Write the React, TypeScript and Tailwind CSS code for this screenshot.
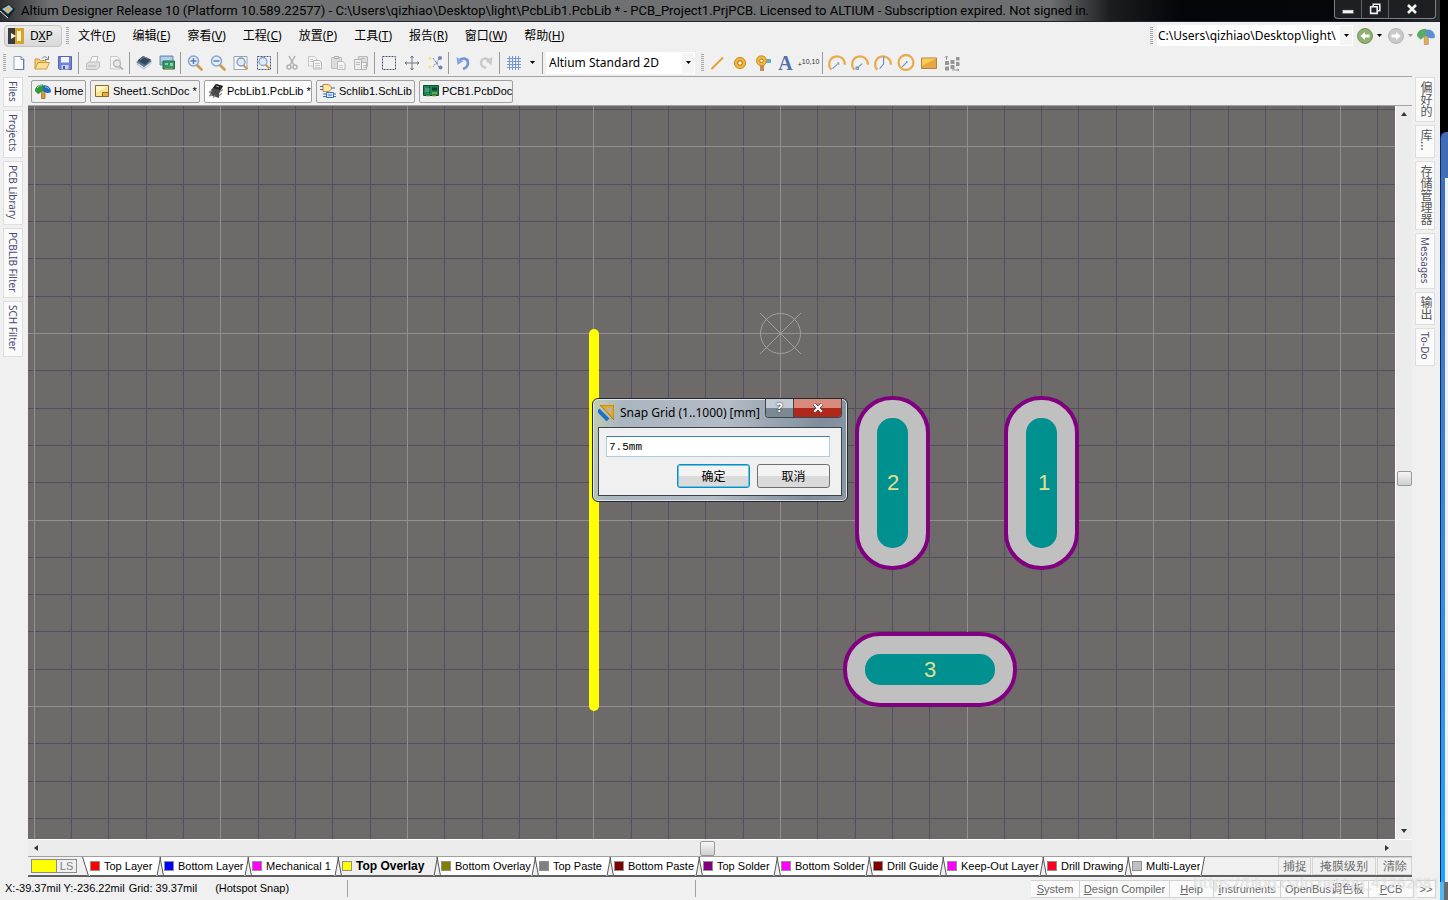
import type { ReactNode } from "react";
import clsx from "clsx";

const menus = [
  ["文件", "F"],
  ["编辑", "E"],
  ["察看", "V"],
  ["工程", "C"],
  ["放置", "P"],
  ["工具", "T"],
  ["报告", "R"],
  ["窗口", "W"],
  ["帮助", "H"],
];

const layers = [
  { name: "Top Layer", color: "bg-[#ff0000]", width: "w-[66px]" },
  { name: "Bottom Layer", color: "bg-[#0000ff]", width: "w-[80px]" },
  { name: "Mechanical 1", color: "bg-[#ff00ff]", width: "w-[82px]" },
  { name: "Top Overlay", color: "bg-[#ffff00]", width: "w-[91px]", active: true },
  { name: "Bottom Overlay", color: "bg-[#808000]", width: "w-[90px]" },
  { name: "Top Paste", color: "bg-[#808080]", width: "w-[67px]" },
  { name: "Bottom Paste", color: "bg-[#800000]", width: "w-[81px]" },
  { name: "Top Solder", color: "bg-[#800080]", width: "w-[70px]" },
  { name: "Bottom Solder", color: "bg-[#ff00ff]", width: "w-[84px]" },
  { name: "Drill Guide", color: "bg-[#800000]", width: "w-[66px]" },
  { name: "Keep-Out Layer", color: "bg-[#ff00ff]", width: "w-[92px]" },
  { name: "Drill Drawing", color: "bg-[#ff0022]", width: "w-[77px]" },
  { name: "Multi-Layer", color: "bg-[#c0c0c0]", width: "w-[68px]" },
];

const leftPanels = [
  { name: "Files", height: "h-[30px]" },
  { name: "Projects", height: "h-[48px]" },
  { name: "PCB Library", height: "h-[64px]" },
  { name: "PCBLIB Filter", height: "h-[70px]" },
  { name: "SCH Filter", height: "h-[56px]" },
];

const rightPanels = [
  { name: "偏好的", height: "h-[45px]", wide: true },
  { name: "库...", height: "h-[33px]", wide: true },
  { name: "存储管理器", height: "h-[69px]", wide: true },
  { name: "Messages", height: "h-[56px]" },
  { name: "输出", height: "h-[33px]", wide: true },
  { name: "To-Do", height: "h-[38px]" },
];

const orange = "#e0a030";

function Svg({ children, size = "size-4" }: { children: ReactNode; size?: string }) {
  return (
    <svg viewBox="0 0 16 16" className={clsx(size, "shrink-0")} fill="none" aria-hidden="true">
      {children}
    </svg>
  );
}

function Lens({ inner }: { inner?: ReactNode }) {
  return (
    <>
      <path d="M10 10l4.5 4.5" stroke="#d09a4a" strokeWidth="2.6" strokeLinecap="round" />
      <circle cx="6.5" cy="6" r="5" fill="#e2edfb" stroke="#8aa4cc" strokeWidth="1.5" />
      {inner}
    </>
  );
}

function Gauge({ hand, full }: { hand: string; full?: boolean }) {
  return (
    <Svg size="size-[18px]">
      {full ? (
        <circle cx="8" cy="7.5" r="6.6" stroke="#e8ab50" strokeWidth="2" />
      ) : (
        <path d="M3 14A7 7 0 1 1 15 9.500" stroke="#e8ab50" strokeWidth="2" />
      )}
      <path d={hand} stroke="#6b90c8" strokeWidth="1" />
    </Svg>
  );
}

const icons: Record<string, ReactNode> = {
  new: (
    <Svg>
      <path d="M3 1.5h7l3 3v10H3z" fill="#fbfdff" stroke="#8ea3bd" />
      <path d="M10 1.5v3h3" stroke="#7389a8" />
      <path d="M12.5 5v9.5H5" stroke="#63799a" />
    </Svg>
  ),
  open: (
    <Svg>
      <path d="M1 14V4h4l1.500 1.500H12V8" fill="#f2cd78" stroke="#c99a3c" />
      <path d="M1 14l3-6.500h11.500L12.500 14z" fill="#ffdf96" stroke="#c99a3c" />
      <path d="M8 3.500c2-2.500 4-2 5.500 0M14.500 1v3.500H11" stroke="#6c84a8" />
    </Svg>
  ),
  save: (
    <Svg>
      <path d="M1.500 1.500h13v13h-12l-1-1z" fill="#7183d6" stroke="#5865b0" />
      <path d="M4 2h8v5.500H4z" fill="#f4f6ff" />
      <path d="M4.500 10h7v4.500h-7z" fill="#c8d0ea" />
      <path d="M6 11h2v3H6z" fill="#4a58a0" />
    </Svg>
  ),
  print: (
    <Svg>
      <path d="M5 7l2-5.500h6L11.500 7" fill="#f6f6f6" stroke="#c0c0c0" />
      <path d="M1.500 8.500L4 7h10.500v5L12 14.500H1.500z" fill="#dedede" stroke="#bcbcbc" />
      <path d="M3 11h8" stroke="#b4b4b4" />
    </Svg>
  ),
  preview: (
    <Svg>
      <path d="M2.500 1.500h7l2.500 3v9.500H2.500z" fill="#f4f4f4" stroke="#c9c9c9" />
      <circle cx="9" cy="8.500" r="3.500" fill="#e7e7e7" stroke="#b8b8b8" strokeWidth="1.400" />
      <path d="M11.500 11.500l3.500 3" stroke="#b5b5b5" strokeWidth="2" />
    </Svg>
  ),
  layers: (
    <Svg>
      <path d="M0 9l8 5.500L16 8l-8-3z" fill="#a9bdd3" />
      <path d="M0 7l8 5 8-6-7-3.500z" fill="#607890" />
      <path d="M1.500 5.500L7 1l8 3.500-6 5.500z" fill="#33475d" />
      <path d="M4 5l4-3 4 1.500" stroke="#6d88a5" />
      <path d="M2 9l6 4 7-5" stroke="#dce7f2" />
    </Svg>
  ),
  board: (
    <Svg>
      <path d="M1 1h13v9H1z" fill="#94b4d8" stroke="#6c8fb8" />
      <path d="M2 3h11M2 5h11" stroke="#dceaf8" />
      <path d="M4 6h11.500v8H4z" fill="#31976a" stroke="#1d704b" />
      <path d="M6 8h3v2H6zM11 8h3v3h-3z" fill="#8fd0a0" />
      <path d="M7 13v2M9 13v2M11 13v2M13 13v2" stroke="#c9a33f" />
    </Svg>
  ),
  zoomIn: <Svg><Lens inner={<path d="M3.500 6h6M6.500 3v6" stroke="#5877ad" strokeWidth="1.400" />} /></Svg>,
  zoomOut: <Svg><Lens inner={<path d="M3.500 6h6" stroke="#5877ad" strokeWidth="1.400" />} /></Svg>,
  zoomDoc: (
    <Svg>
      <path d="M1 1.500h13v13H1z" fill="#f8fafc" stroke="#98a4b4" />
      <path d="M10 10l4.500 4" stroke="#d09a4a" strokeWidth="2.200" />
      <circle cx="8" cy="7" r="4" fill="#dceafa" stroke="#7e98c0" strokeWidth="1.300" />
    </Svg>
  ),
  zoomArea: (
    <Svg>
      <path d="M1.500 1.500h13v13h-13z" stroke="#46557c" strokeDasharray="2 1" />
      <path d="M9.500 9.500l4 4" stroke="#d09a4a" strokeWidth="2.200" />
      <circle cx="7" cy="6.500" r="4" fill="#dceafa" stroke="#8aa4cc" strokeWidth="1.300" />
    </Svg>
  ),
  cut: (
    <Svg>
      <path d="M5 1l5 9M11 1L6 10" stroke="#b0b0b0" strokeWidth="1.500" />
      <circle cx="5" cy="12" r="2" stroke="#b0b0b0" strokeWidth="1.500" />
      <circle cx="11" cy="12" r="2" stroke="#b0b0b0" strokeWidth="1.500" />
    </Svg>
  ),
  copy: (
    <Svg>
      <path d="M1.500 1.500h6l2 2V11h-8z" fill="#f3f3f3" stroke="#c8c8c8" />
      <path d="M6.500 5.500h6l2 2V14h-8z" fill="#f3f3f3" stroke="#b8b8b8" />
      <path d="M8 8.500h5M8 10.500h5M8 12.500h5M3 4.500h3M3 6.500h3" stroke="#c8c8c8" />
    </Svg>
  ),
  paste: (
    <Svg>
      <path d="M1.500 2.500h10v11h-10z" fill="#dcdcdc" stroke="#c0c0c0" />
      <path d="M4.500 1.500h4v2h-4z" fill="#eee" stroke="#aaa" />
      <path d="M7.500 6.500H13l2 2v6H7.500z" fill="#f6f6f6" stroke="#b8b8b8" />
      <path d="M9 10.500h4M9 12.500h4" stroke="#c5c5c5" />
    </Svg>
  ),
  stamp: (
    <Svg>
      <path d="M5.500 1.500h9v10h-9z" fill="#dcdcdc" stroke="#bcbcbc" />
      <path d="M1.500 4.500h7v10h-7z" fill="#eee" stroke="#b5b5b5" />
      <path d="M8.500 7.500h5v7h-5z" fill="#f6f6f6" stroke="#b0b0b0" />
      <path d="M3 7.500h4M3 9.500h4M10 10.500h3M10 12.500h3M8 3.500h4" stroke="#bbb" />
    </Svg>
  ),
  select: <Svg><path d="M1.500 1.500h13v13h-13z" stroke="#46557c" strokeDasharray="2 1" /></Svg>,
  move: (
    <Svg>
      <path d="M8 1v14M1 8h14" stroke="#6e7684" />
      <path d="M6.500 3L8 1l1.500 2M6.500 13L8 15l1.500-2M3 6.500L1 8l2 1.500M13 6.500L15 8l-2 1.500" stroke="#6e7684" />
    </Svg>
  ),
  deselect: (
    <Svg>
      <path d="M6 3l6 9M12 4l-6 8" stroke="#6d7fa0" strokeDasharray="2 1" />
      <circle cx="3" cy="3.500" r="1.800" fill="#f3e2a0" />
      <circle cx="3" cy="12" r="1.800" fill="#f3e2a0" />
      <circle cx="13" cy="3" r="2" fill="#6f86b4" />
      <circle cx="13.500" cy="12.500" r="2" fill="#6f86b4" />
      <circle cx="10" cy="8" r="1.200" fill="#8ba0c8" />
    </Svg>
  ),
  undo: (
    <Svg>
      <path d="M4 6c3-4 9-3 9 2 0 3-2 5-5 6" stroke="#7495dc" strokeWidth="2.600" />
      <path d="M1.500 2l1 8 6-4z" fill="#86a5e4" />
    </Svg>
  ),
  redo: (
    <Svg>
      <path d="M12 6C9 2 3 3 3 8c0 3 2 4 5 5" stroke="#c9c9c9" strokeWidth="2.400" />
      <path d="M14.500 2l-1 8-6-4z" fill="#c9c9c9" />
    </Svg>
  ),
  grid: <Svg><path d="M3.500 1v14M6.500 1v14M9.500 1v14M12.500 1v14M1 3.500h14M1 6.500h14M1 9.500h14M1 12.500h14" stroke="#7896d0" /></Svg>,
  line: <Svg><path d="M2.500 14L14 2.500" stroke={orange} strokeWidth="1.800" /></Svg>,
  pad: (
    <Svg>
      <circle cx="8" cy="8" r="5.600" fill="#f2b93c" stroke="#c58a28" />
      <circle cx="8" cy="8" r="2.400" stroke="#a9751e" />
      <circle cx="8" cy="8" r="1.500" fill="#fff" />
    </Svg>
  ),
  via: (
    <Svg>
      <path d="M8 4h8v4H8z" fill="#5cb0d8" />
      <path d="M5 8h4v8H5z" fill="#c98a62" />
      <circle cx="6.500" cy="5.800" r="5" fill="#f2b93c" stroke="#c58a28" />
      <circle cx="6.500" cy="5.800" r="1.800" fill="#fff4d0" stroke="#b07c20" />
    </Svg>
  ),
  text: <span className="font-['Liberation_Serif',serif] text-xl leading-none font-bold text-[#4f70ae]">A</span>,
  coord: (
    <span className="flex items-end font-['Liberation_Sans',sans-serif] text-[7px] leading-none text-[#333]">
      <span>+</span>
      <span className="pb-[3px]">10,10</span>
    </span>
  ),
  arc1: <Gauge hand="M4 13l4.500-4M8 8h1.500v1.500" />,
  arc2: <Gauge hand="M5.500 12.500L10 8.500M4.500 11.500h2v2h-2z" />,
  arc3: <Gauge hand="M8.500 2v7L5 13" />,
  circle: <Gauge full hand="M4.500 11.500L9 7M8 7h1.500" />,
  fill: (
    <Svg>
      <path d="M.500 3h15v10.500H.500z" fill="#e3a743" stroke="#b67e45" />
      <path d="M1 3.500h14L1 11z" fill="#f7cb54" />
    </Svg>
  ),
  array: (
    <Svg>
      <path
        d="M1 6h4v4H1zM1 11.500h4v4H1zM6.500 5h4v4h-4zM6.500 10h4v4h-4zM12 2h3.500v3.500H12zM12 7h3.500v4H12z"
        fill="#969696"
      />
      <path d="M2.500 5V1M1 2.500L2.500 1 4 2.500M8 15h7M13.500 13.500L15 15l-1.500 1" stroke="#969696" />
    </Svg>
  ),
  tree: (
    <Svg>
      <path d="M6.500 5h3.500v10.500H6.500z" fill="#d79c2e" stroke="#7a5418" strokeWidth=".600" />
      <path d="M0 8c0-4 3-6.500 8-6.500V8c-2 0-3 3-5 3z" fill="#2f9a3a" />
      <path d="M8 2.500c4-1 8 2 8 6.500-2 2-5 1-8-1z" fill="#2268c4" />
      <path d="M2 5c2-2 3-2.500 5-2.500M10 4c2 0 3 1 4 2" stroke="#9fd6a0" />
    </Svg>
  ),
  sheet: (
    <Svg>
      <path d="M1.500 2.500h13v11h-13z" fill="#fbe38c" stroke="#8a6d24" />
      <path d="M2 3h12L2 10z" fill="#fff6c8" />
      <path d="M8.500 9.500h6v4h-6z" fill="#e2b23f" stroke="#8a6d24" />
    </Svg>
  ),
  chip: (
    <Svg>
      <path d="M3 7l5-6 7 2-4 8v4l-9-3z" fill="#4a4a4a" />
      <path d="M8 1l7 2-3 4-7-2z" fill="#222" />
      <path d="M1 9.500l3-1.500M1 13l3-1.500M5 14.500l2-2M11 12.500l3-2M12 8.500l3-2" stroke="#8a8a8a" strokeWidth="1.500" />
      <path d="M8 3l3 1" stroke="#aaa" />
    </Svg>
  ),
  schlib: (
    <Svg>
      <path d="M3 1.500h4c6 0 6 7 0 7H3z" fill="#ffe9a8" stroke="#c58a28" />
      <path d="M0 3.500h3M0 6.500h3M11.500 5H15" stroke="#2f66b4" />
      <path d="M6.500 9.500h7v5h-7z" fill="#d8e8fb" stroke="#3a6fb8" />
      <path d="M3 11h3M3 13.500h3M14 11h2M14 13.500h2M8 12h4" stroke="#3a6fb8" />
    </Svg>
  ),
  pcb: (
    <Svg>
      <path d="M.500 2.500h15v10H.500z" fill="#128a50" stroke="#0b4f30" />
      <path d="M2 4h5v6H2z" fill="#0a3c30" />
      <path d="M3 4v6M5 4v6M2 6h5M2 8h5" stroke="#7cc7a4" strokeWidth=".800" />
      <path d="M9 4.500h5v3H9z" fill="#173b2c" />
      <path d="M9 10h5M4 12v2M6 12v2M10 12v2M12 12v2" stroke="#d7b747" />
    </Svg>
  ),
};

const toolGroups = [
  ["new", "open", "save"],
  ["print", "preview"],
  ["layers", "board"],
  ["zoomIn", "zoomOut", "zoomDoc", "zoomArea"],
  ["cut", "copy", "paste", "stamp"],
  ["select", "move", "deselect"],
  ["undo", "redo"],
];

const docs = [
  { icon: "tree", name: "Home", width: "w-[55px]" },
  { icon: "sheet", name: "Sheet1.SchDoc *", width: "w-[110px]" },
  { icon: "chip", name: "PcbLib1.PcbLib *", width: "w-[108px]", active: true },
  { icon: "schlib", name: "Schlib1.SchLib", width: "w-[99px]" },
  { icon: "pcb", name: "PCB1.PcbDoc", width: "w-[94px]" },
];

function Grip() {
  return <div className="h-[18px] w-[3px] shrink-0 bg-[repeating-linear-gradient(#a8a8a8_0_1px,transparent_1px_2px)]" />;
}

function Sep() {
  return (
    <div className="flex w-[5px] shrink-0 justify-center">
      <div className="h-[22px] w-px bg-[#9a9a9a]" />
    </div>
  );
}

function Caret({ className }: { className?: string }) {
  return (
    <svg viewBox="0 0 5 3" className={clsx("h-[3px] w-[5px] shrink-0", className)} fill="currentColor" aria-hidden="true">
      <path d="M0 0h5L2.500 3z" />
    </svg>
  );
}

function Tool({ name }: { name: string }) {
  return (
    <button type="button" aria-label={name} className="flex h-6 w-[23px] shrink-0 items-center justify-center">
      {icons[name]}
    </button>
  );
}

function TitleBar() {
  return (
    <header className="flex h-[22px] shrink-0 items-center justify-between border-b border-[#1b2434] bg-[linear-gradient(90deg,#2c2e2f_0,#6f7172_50px,#6d6f70_1050px,#1b1d1f_1110px,#030608_1180px,#05080a_95%,#2a2e30)]">
      <div className="flex items-center gap-[5px] whitespace-nowrap">
        <Svg>
          <path d="M0 6l9-5 6 5-6 9z" fill="#13252d" />
          <path d="M2 6l7-4 4 4-5 5z" fill="#9ec0c4" />
          <path d="M5 7l4-3 2 2-3 3z" fill="#d8b25a" />
          <path d="M0 8l8 7" stroke="#dfe8e8" />
        </Svg>
        <h1 className="font-['Roboto',sans-serif] text-[13px] leading-5 text-black">
          Altium Designer Release 10 (Platform 10.589.22577) - C:\Users\qizhiao\Desktop\light\PcbLib1.PcbLib * -
          PCB_Project1.PrjPCB. Licensed to ALTIUM - Subscription expired. Not signed in.
        </h1>
      </div>
      <div className="mr-1 flex h-[19px] self-start rounded-b border border-t-0 border-[#7c8082] bg-[#1d2022] text-white">
        <button type="button" aria-label="Minimize" className="flex w-[27px] items-center justify-center border-r border-[#5f6365]">
          <Svg><path d="M2.500 9h11v3.500h-11z" fill="#f4f4f4" stroke="#555" strokeWidth=".500" /></Svg>
        </button>
        <button type="button" aria-label="Restore" className="flex w-[27px] items-center justify-center border-r border-[#5f6365]">
          <Svg size="size-[14px]"><path d="M6 5V2.500h7.500V10H11M3 5.500h7.500V13H3z" stroke="#f4f4f4" strokeWidth="1.800" /></Svg>
        </button>
        <button type="button" aria-label="Close" className="flex w-[46px] items-center justify-center">
          <Svg><path d="M4 4l8 8M12 4l-8 8" stroke="#f4f4f4" strokeWidth="2.600" /></Svg>
        </button>
      </div>
    </header>
  );
}

function MenuBar() {
  return (
    <nav className="flex h-[27px] shrink-0 items-center text-xs text-black">
      <button type="button" className="ml-1 flex h-[22px] w-[58px] shrink-0 items-center gap-[6px] rounded-sm border border-[#c4c4c4] bg-linear-to-b from-[#ececec] to-[#d9d9d9] pl-[3px]">
        <Svg>
          <path d="M0 0h7v16H0z" fill="#3b3b3b" />
          <path d="M7 0h9v16H7z" fill="#d6a42c" />
          <path d="M9 3h4v10H9z" fill="#fff2c0" />
          <path d="M3 5l5 3-5 3z" fill="#f0f0f0" />
        </Svg>
        <span>D<u>X</u>P</span>
      </button>
      <div className="ml-1"><Grip /></div>
      <ul className="ml-[9px] flex gap-[17px]">
        {menus.map(([label, key]) => (
          <li key={key}>
            <button type="button" className="whitespace-nowrap">{label}(<u>{key}</u>)</button>
          </li>
        ))}
      </ul>
      <div className="ml-auto flex items-center">
        <Grip />
        <div className="relative ml-1 h-[21px] w-[196px] border border-white bg-white">
          <select aria-label="Address" className="block h-full w-[182px] appearance-none overflow-hidden text-clip">
            <option>C:\Users\qizhiao\Desktop\light\</option>
          </select>
          <span className="pointer-events-none absolute inset-y-0 right-0 flex w-3 items-center justify-center bg-[#f4f4f4]">
            <Caret />
          </span>
        </div>
        <button type="button" aria-label="Back" className="ml-1 flex items-center gap-1">
          <Svg>
            <circle cx="8" cy="8" r="7.500" fill="#8fb070" stroke="#75935a" />
            <path d="M3.500 8L8 4v2.500h4.500v3H8V12z" fill="#fff" />
          </Svg>
          <Caret />
        </button>
        <button type="button" aria-label="Forward" className="ml-[6px] flex items-center gap-1 text-[#999]">
          <Svg>
            <circle cx="8" cy="8" r="7.500" fill="#c9c9c9" stroke="#b4b4b4" />
            <path d="M12.500 8L8 4v2.500H3.500v3H8V12z" fill="#fff" />
          </Svg>
          <Caret />
        </button>
        <button type="button" aria-label="Home page" className="mr-[5px] ml-1">
          <Svg size="size-[18px]">
            <path d="M6.500 5H10v10.500H6.500z" fill="#e0ae5c" stroke="#b58745" strokeWidth=".600" />
            <path d="M0 8c0-4 3-6.500 8-6.500V8c-2 0-3 3-5 3z" fill="#5cab63" />
            <path d="M8 2.500c4-1 8 2 8 6.500-2 2-5 1-8-1z" fill="#5a90d4" />
          </Svg>
        </button>
      </div>
    </nav>
  );
}

function Toolbar() {
  return (
    <div className="flex h-[27px] shrink-0 items-center">
      <div className="mr-px ml-[3px] shrink-0"><Grip /></div>
      {toolGroups.map((group) => (
        <div key={group[0]} className="flex items-center">
          {group.map((name) => <Tool key={name} name={name} />)}
          <Sep />
        </div>
      ))}
      <Tool name="grid" />
      <button type="button" aria-label="Grid options" className="flex h-6 w-[15px] items-center justify-center"><Caret /></button>
      <Sep />
      <div className="relative ml-px h-[22px] w-[149px] bg-white">
        <select aria-label="View configuration" className="block h-full w-full appearance-none pl-[3px] text-xs text-black">
          <option>Altium Standard 2D</option>
        </select>
        <span className="pointer-events-none absolute inset-y-px right-px flex w-3 items-center justify-center bg-[#f4f4f4]">
          <Caret />
        </span>
      </div>
      <div className="mr-px ml-[6px]"><Grip /></div>
      {["line", "pad", "via", "text", "coord"].map((name) => <Tool key={name} name={name} />)}
      <Sep />
      {["arc1", "arc2", "arc3", "circle", "fill", "array"].map((name) => <Tool key={name} name={name} />)}
    </div>
  );
}

function Rail({ panels }: { panels: { name: string; height: string; wide?: boolean }[] }) {
  return (
    <aside className="flex w-7 shrink-0 flex-col gap-[3px] px-[3px] pt-px">
      {panels.map((p) => (
        <button
          key={p.name}
          type="button"
          className={clsx(
            "flex w-5 items-center border border-[#dedede] bg-[#fafafa] pt-[3px] leading-[18px] whitespace-nowrap [writing-mode:vertical-rl]",
            p.wide ? "text-xs text-[#555]" : "text-[10px] text-[#4c4c70]",
            p.height,
          )}
        >
          {p.name}
        </button>
      ))}
    </aside>
  );
}

function DocTabs() {
  return (
    <div className="flex h-[30px] shrink-0 items-center gap-1 border-y border-[#a4a4a4] pl-[3px] font-['Liberation_Sans',sans-serif] text-[11px] text-black">
      {docs.map((d) => (
        <button
          key={d.name}
          type="button"
          className={clsx(
            "flex h-[23px] shrink-0 items-center gap-[3px] rounded-xs border border-[#a0a0a0] pl-[3px] whitespace-nowrap",
            d.width,
            d.active ? "bg-white" : "bg-[#f0f0f0]",
          )}
        >
          {icons[d.icon]}
          {d.name}
        </button>
      ))}
    </div>
  );
}

// snap grid, every fifth line is a major one, origin at 752,227
const step = 37.31;
const steps = Array.from({ length: 61 }, (_, i) => i - 30);
const sorted = [...steps.filter((k) => k % 5 !== 0), ...steps.filter((k) => k % 5 === 0)];

function Pad({ x, y, w, h, label, lx }: { x: number; y: number; w: number; h: number; label: string; lx: number }) {
  return (
    <g>
      <rect x={x} y={y} width={w} height={h} rx="35" fill="#c0c0c0" stroke="#800080" strokeWidth="4" />
      <rect x={x + 20} y={y + 20} width={w - 40} height={h - 40} rx="15" fill="#009090" />
      <text x={lx} y={y + h / 2 + 7} textAnchor="middle" fontSize="22" fill="#e0e090" fontFamily="Liberation Sans">
        {label}
      </text>
    </g>
  );
}

function Canvas() {
  return (
    <svg className="size-full bg-[#6d6a69]" role="img" aria-label="Footprint editor">
      <g shapeRendering="crispEdges">
        {sorted.map((k) => {
          const gx = Math.round(752 + k * step) + 0.5;
          const gy = Math.round(227 + k * step) + 0.5;
          const stroke = k % 5 === 0 ? "#929090" : "#50505f";
          return (
            <g key={k} stroke={stroke}>
              <line x1={gx} y1="0" x2={gx} y2="100%" />
              <line x1="0" y1={gy} x2="100%" y2={gy} />
            </g>
          );
        })}
      </g>
      <g stroke="#a0a0a0" fill="none">
        <circle cx="752.500" cy="227.500" r="20" />
        <path d="M732 207l41 41M773 207l-41 41" />
      </g>
      <line x1="566" y1="228" x2="566" y2="600" stroke="#ffff00" strokeWidth="10" strokeLinecap="round" />
      <Pad x={829} y={292} w={71} h={170} label="2" lx={865} />
      <Pad x={978} y={292} w={71} h={170} label="1" lx={1016} />
      <Pad x={817} y={528} w={170} h={71} label="3" lx={902} />
    </svg>
  );
}

function Arrow({ d }: { d: string }) {
  return (
    <button type="button" aria-label="Scroll" className="flex size-4 shrink-0 items-center justify-center">
      <svg viewBox="0 0 8 8" className="size-2" fill="#333" aria-hidden="true"><path d={d} /></svg>
    </button>
  );
}

function LayerEdge({ left, right }: { left?: string; right?: string }) {
  return (
    <svg viewBox="0 0 8 19" className="h-[19px] w-2 shrink-0" fill="none" aria-hidden="true">
      {left && <path d="M0 0h4.500L1.500 19H0z" fill={left} />}
      {right && (left ? <path d="M4.500 0H8v19H7z" fill={right} /> : <path d="M0 0h8v19H6z" fill={right} />)}
      {left && <path d="M4.500 0L1 19" stroke="#555" />}
      {right && <path d={left ? "M4 0l3.500 19" : "M.500 0l6 19"} stroke="#555" />}
    </svg>
  );
}

function LayerBar() {
  const shade = (i: number) => (layers[i] ? (layers[i].active ? "#f0f0f0" : "#ffffff") : undefined);
  return (
    <div className="flex h-[21px] shrink-0 border-t border-b-2 border-t-[#a0a0a0] border-b-[#606060] font-['Liberation_Sans',sans-serif] text-[11px] text-black">
      <button type="button" className="mt-[2px] mr-[5px] ml-[3px] flex h-[14px] w-[46px] shrink-0 border border-[#8a8a8a] leading-3 text-[#808080]">
        <span className="h-full w-[25px] border-r border-[#8a8a8a] bg-[#ffff00]" />
        <span className="flex-1">LS</span>
      </button>
      <LayerEdge right="#ffffff" />
      {layers.map((l, i) => (
        <div key={l.name} className="flex">
          <button
            type="button"
            className={clsx(
              "flex h-[18px] items-center gap-1 whitespace-nowrap",
              l.width,
              l.active ? "bg-[#f0f0f0] text-xs font-bold" : "bg-white",
            )}
          >
            <span className={clsx("size-[10px] shrink-0 border border-[#909090]", l.color)} />
            {l.name}
          </button>
          <LayerEdge left={shade(i)} right={shade(i + 1)} />
        </div>
      ))}
      <div className="ml-auto flex gap-px text-xs text-[#666]">
        <button type="button" className="w-[33px] border border-[#d4d4d4] leading-4">捕捉</button>
        <button type="button" className="w-16 border border-[#d4d4d4] leading-4">掩膜级别</button>
        <button type="button" className="w-[35px] border border-[#d4d4d4] leading-4">清除</button>
      </div>
    </div>
  );
}

function StatusBar() {
  const cell = "h-[18px] shrink-0 border border-l-0 border-[#d2d2d2] bg-[#fafafa] whitespace-nowrap";
  return (
    <footer className="relative flex h-[23px] shrink-0 items-center font-['Liberation_Sans','Noto_Sans_CJK_SC',sans-serif] text-[11px] text-black">
      <div className="flex h-[17px] w-[348px] items-center gap-1 border-r border-[#a0a0a0] pl-[5px]">
        <span>X:-39.37mil Y:-236.22mil</span>
        <span>Grid: 39.37mil</span>
        <span className="ml-[14px]">(Hotspot Snap)</span>
      </div>
      <div className="h-[17px] w-[348px] border-r border-[#a0a0a0]" />
      <div className="mr-1 ml-auto flex text-[#666]">
        <button type="button" className={clsx(cell, "w-[49px] border-l")}><u>S</u>ystem</button>
        <button type="button" className={clsx(cell, "w-[90px]")}><u>D</u>esign Compiler</button>
        <button type="button" className={clsx(cell, "w-11")}><u>H</u>elp</button>
        <button type="button" className={clsx(cell, "w-[67px]")}><u>I</u>nstruments</button>
        <button type="button" className={clsx(cell, "w-[88px]")}>OpenBus调色板</button>
        <button type="button" className={clsx(cell, "w-[45px]")}><u>P</u>CB</button>
        <button type="button" className={clsx(cell, "ml-[3px] w-[19px] border-l")}>&gt;&gt;</button>
      </div>
      <span className="pointer-events-none absolute right-0 bottom-2 text-right font-['Noto_Sans',sans-serif] text-[15px] leading-5 text-white/60 [text-shadow:0_0_1px_#bbb]">
        https://blog.csdn.net/qq_41262681
      </span>
    </footer>
  );
}

function SnapDialog() {
  const button = "h-6 w-[73px] rounded-[3px] border bg-linear-to-b from-[#f3f3f3] from-50% to-[#dadada] to-50% pt-px leading-5";
  return (
    <div className="absolute inset-0 flex items-center justify-center">
      <form
        role="dialog"
        aria-labelledby="snap-title"
        className="flex h-[104px] w-64 flex-col rounded-md border border-[#222a30] bg-[linear-gradient(100deg,#c3d0b0_0,#a9b5bf_12%,#b4bcc6_50%,#7f8d9c_85%,#8c98a4)] px-[5px] pb-[5px] shadow-[inset_0_0_0_1px_#dfe6ea]"
      >
        <div className="flex h-7 shrink-0 items-center">
          <Svg>
            <path d="M2 0h14v15z" fill="#e3a92c" stroke="#a87716" />
            <path d="M8 3h5v6z" fill="#aab6c2" />
            <path d="M0 5l10 10" stroke="#1f6fc0" strokeWidth="4" />
          </Svg>
          <h2 id="snap-title" className="ml-[6px] text-xs whitespace-nowrap text-black">Snap Grid (1..1000) [mm]</h2>
          <div className="ml-auto flex h-[19px] self-start overflow-hidden rounded-b border border-t-0 border-[#3c454e]">
            <button type="button" aria-label="Help" className="flex w-7 items-center justify-center border-r border-[#3c454e] bg-linear-to-b from-[#c4cbd2] from-50% to-[#7c8894] to-50% text-[13px] font-bold text-white [text-shadow:0_0_2px_#000]">
              ?
            </button>
            <button type="button" aria-label="Close dialog" className="flex w-[47px] items-center justify-center bg-linear-to-b from-[#d98a7c] from-50% to-[#b0281a] to-50%">
              <Svg size="size-3">
                <path d="M3 3l10 10M13 3L3 13" stroke="#4a3a3a" strokeWidth="5" />
                <path d="M3 3l10 10M13 3L3 13" stroke="#fff" strokeWidth="3" />
              </Svg>
            </button>
          </div>
        </div>
        <div className="flex flex-1 flex-col border border-[#3a444c] bg-[#f0f0f0] pt-2 pr-[11px] pl-[7px] text-xs text-black">
          <input
            aria-label="Snap grid"
            defaultValue="7.5mm"
            className="h-[21px] w-full border border-[#a8cde6] border-t-[#3c7fb1] bg-white px-[2px] font-['Liberation_Mono',monospace] text-[11px]"
          />
          <div className="mt-[7px] flex justify-end gap-[7px]">
            <button type="submit" className={clsx(button, "border-[#2c80ae] shadow-[inset_0_0_0_1px_#46d0f8]")}>确定</button>
            <button type="button" className={clsx(button, "border-[#707070]")}>取消</button>
          </div>
        </div>
      </form>
    </div>
  );
}

export default function App() {
  return (
    <div className="flex h-screen overflow-hidden bg-[#f0f0f0] font-['Noto_Sans','Noto_Sans_CJK_SC',sans-serif]">
      <div className="relative flex min-w-0 flex-1 flex-col">
        <TitleBar />
        <MenuBar />
        <Toolbar />
        <div className="flex min-h-0 flex-1">
          <Rail panels={leftPanels} />
          <main className="flex min-w-0 flex-1 flex-col">
            <DocTabs />
            <div className="flex min-h-0 flex-1">
              <div className="min-w-0 flex-1"><Canvas /></div>
              <div className="flex w-[17px] shrink-0 flex-col items-center justify-between border-l border-white bg-[#ececec]">
                <Arrow d="M1 6l3-4 3 4z" />
                <div className="mt-3 size-[15px] rounded-xs border border-[#999] bg-linear-to-b from-[#f6f6f6] to-[#cfcfcf]" />
                <Arrow d="M1 2l3 4 3-4z" />
              </div>
            </div>
            <div className="flex h-[17px] shrink-0 items-center justify-between border-t border-white bg-[#ececec] pr-[17px]">
              <Arrow d="M6 1L2 4l4 3z" />
              <div className="mr-2 size-[15px] rounded-xs border border-[#999] bg-linear-to-b from-[#f6f6f6] to-[#cfcfcf]" />
              <Arrow d="M2 1l4 3-4 3z" />
            </div>
            <LayerBar />
          </main>
          <Rail panels={rightPanels} />
        </div>
        <StatusBar />
        <SnapDialog />
      </div>
      <div className="flex w-2 shrink-0 flex-col bg-black">
        <div className="h-[132px]" />
        <div className="flex-1 rounded-tl-md border-l border-[#0a2c78] bg-linear-to-b from-[#3f6cb4] to-[#1ca4ff] pt-[46px] pl-1">
          <div className="h-full bg-[#f0f0f0]" />
        </div>
        <div className="h-[18px] border-l-4 border-[#4fb8f0] bg-[#6a6a6a]" />
      </div>
    </div>
  );
}
